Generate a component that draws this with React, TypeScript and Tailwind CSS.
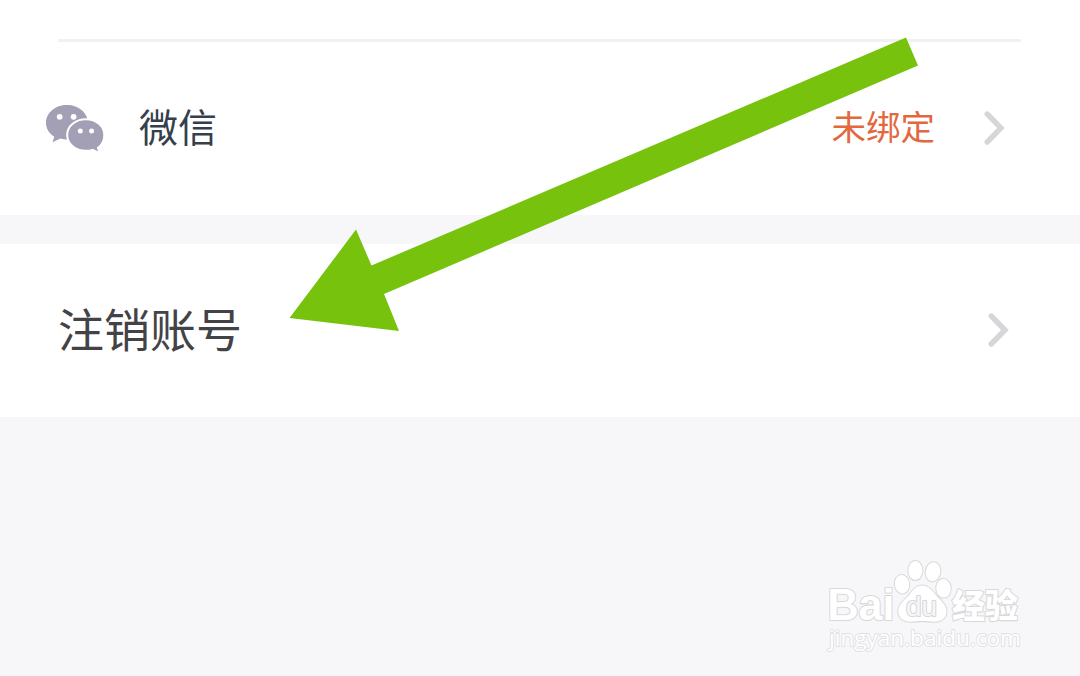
import React from 'react';

const Chevron: React.FC = () => (
  <svg className="w-6 h-9 shrink-0 text-[#d6d6d8]" viewBox="0 0 24 36" fill="none" stroke="currentColor" strokeWidth={5.4} strokeLinecap="round">
    <path strokeLinejoin="miter" d="M4.2 4L18 18L4.2 32" />
  </svg>
);

const WechatIcon: React.FC = () => (
  <svg className="w-[60px] h-12 shrink-0" viewBox="0 0 60 48">
    <path fill="#a39fb4" d="M22 1C10.300 1 1 8.800 1 18.700c0 5.900 3.200 10.700 8.300 14.100L7.500 38.200l7.900-3.700c2.200.6 4.300.9 6.600.9 11.700 0 21-7.300 21-16.700S33.700 1 22 1z" />
    <path fill="#a39fb4" stroke="#fff" strokeWidth={2} d="M40.800 15.300c-10.300 0-18.600 6.900-18.600 15.700s8.300 15.800 18.600 15.800c2.400 0 4.700-.3 6.800-.9l7 3.400-1.600-5.400c3.800-2.900 6.300-7.600 6.300-12.900 0-8.800-8.200-15.700-18.500-15.700z" />
    <circle cx="14.700" cy="12.800" r="2.900" fill="#fff" />
    <circle cx="28.600" cy="12.800" r="2.900" fill="#fff" />
    <circle cx="35.300" cy="26.900" r="2.500" fill="#fff" />
    <circle cx="46.600" cy="26.900" r="2.500" fill="#fff" />
  </svg>
);

const Arrow: React.FC = () => (
  <svg className="absolute left-0 top-0 w-[1080px] h-[420px] pointer-events-none" viewBox="0 0 1080 420">
    <path fill="#76c20d" d="M289.500 318L356 229.500L371.500 265.500L906 37.500L918 65.500L384 294L399 331z" />
  </svg>
);

const Watermark: React.FC = () => (
  <svg className="absolute left-[815px] top-[550px] w-[220px] h-[110px]" viewBox="0 0 220 110" fill="#fff" stroke="#d9d9db" strokeWidth={2.2} strokeLinejoin="round" paintOrder="stroke">
    <text x="12.500" y="70" fontSize="43.500" fontWeight="700" textLength="67" lengthAdjust="spacingAndGlyphs" className="font-['Liberation_Sans',sans-serif]">Bai</text>
    <g strokeWidth={2}>
      <ellipse cx="87" cy="34.300" rx="7.200" ry="9.300" transform="rotate(-8 87 34.300)" />
      <ellipse cx="100.300" cy="20.500" rx="7" ry="9.600" />
      <ellipse cx="118" cy="21.800" rx="7.300" ry="9.500" transform="rotate(10 118 21.800)" />
      <ellipse cx="128.500" cy="38.300" rx="7.300" ry="9.300" transform="rotate(-5 128.500 38.300)" />
      <path d="M107 35.500c-6.800 0-9.700 5.800-13.500 10.300C89 50.700 83.300 54.500 83.300 61c0 6.900 5.200 10.700 11.700 10.700 4.300 0 8-.6 12-.6s8.300.6 12.700.6c6.700 0 11.700-3.500 11.700-10.500 0-6.600-5-9.800-9.600-15.200-3.900-4.700-8-10.500-14.800-10.500z" />
    </g>
    <text x="91" y="66" fontSize="27" textLength="31" lengthAdjust="spacingAndGlyphs" fill="#f6f6f8" className="font-['Liberation_Sans',sans-serif]">du</text>
    <text x="137" y="67.500" fontSize="33" fontWeight="900" textLength="66" lengthAdjust="spacingAndGlyphs" className="font-['Noto_Sans_CJK_SC',sans-serif]">经验</text>
    <text x="14" y="95.500" fontSize="22" textLength="192" lengthAdjust="spacingAndGlyphs" stroke="#e0e0e2" strokeWidth={1.8} className="font-['Open_Sans',sans-serif]">jingyan.baidu.com</text>
  </svg>
);

const App: React.FC = () => {
  return (
    <div className="relative w-[1080px] h-[676px] overflow-hidden bg-[#f7f7fa] font-['Noto_Sans_CJK_SC',sans-serif]">
      {/* Linked accounts */}
      <section className="h-[215px] bg-white pt-[39px]">
        <div className="ml-[58px] w-[963px] h-[3px] bg-[#f1f1f1]" />
        <div className="flex items-center h-[171px] pl-[45px] pr-[73px]">
          <WechatIcon />
          <span className="ml-[34px] pb-1 text-[39px] leading-none text-[#35404d]">微信</span>
          <span className="ml-auto mr-[48px] pb-1 text-[34.5px] leading-none text-[#e2683f]">未绑定</span>
          <Chevron />
        </div>
      </section>

      {/* Account removal */}
      <section className="mt-[29px] flex items-center justify-between h-[173px] bg-white pl-[58px] pr-[69px] pb-0.5">
        <span className="pb-1.5 text-[46px] leading-none text-[#434347]">注销账号</span>
        <Chevron />
      </section>

      <Arrow />
      <Watermark />
    </div>
  );
};

export default App;
